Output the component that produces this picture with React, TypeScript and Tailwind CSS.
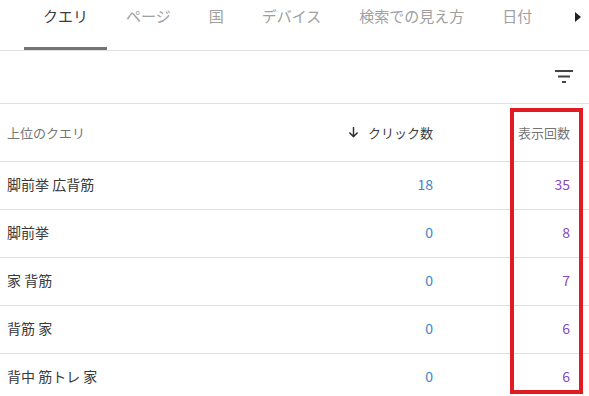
import React from "react";

const tabs = ["クエリ", "ページ", "国", "デバイス", "検索での見え方", "日付"];

const rows = [
  { q: "脚前挙 広背筋", clicks: 18, views: 35 },
  { q: "脚前挙", clicks: 0, views: 8 },
  { q: "家 背筋", clicks: 0, views: 7 },
  { q: "背筋 家", clicks: 0, views: 6 },
  { q: "背中 筋トレ 家", clicks: 0, views: 6 },
];

export default function App() {
  return (
    <div
      className="relative w-[589px] h-[396px] overflow-hidden bg-white"
      style={{ fontFamily: '"Noto Sans CJK JP", "Noto Sans", sans-serif' }}
    >
      {/* tabs */}
      <div className="flex h-[51px] border-b border-[#e0e0e0] pl-[24px]">
        {tabs.map((t, i) => (
          <div
            key={t}
            className={
              i === 0
                ? "flex h-[50px] items-start pt-[5px] px-[19px] text-[15px] text-[#3c3c3c] border-b-[3px] border-[#757575] -mb-[1px]"
                : "flex h-[50px] items-start pt-[5px] px-[19px] text-[15px] text-[#a0a0a0]"
            }
          >
            {t}
          </div>
        ))}
        <div className="ml-auto mr-[8px] mt-[12px]">
          <svg width="6" height="10" viewBox="0 0 6 10">
            <path d="M0 0 L6 5 L0 10 Z" fill="#222" />
          </svg>
        </div>
      </div>

      {/* toolbar */}
      <div className="flex h-[53px] items-center justify-end border-b border-[#e0e0e0] pr-[16px]">
        <svg width="18" height="14" viewBox="0 0 18 14">
          <rect x="0" y="0" width="18" height="2" fill="#444" />
          <rect x="3" y="5.5" width="12" height="2" fill="#444" />
          <rect x="7" y="11" width="4" height="2" fill="#444" />
        </svg>
      </div>

      {/* header */}
      <div className="flex h-[58px] items-center border-b border-[#e0e0e0] text-[13px] leading-none text-[#757575]">
        <div className="flex-1 pl-[7px]">上位のクエリ</div>
        <div className="flex w-[120px] items-center justify-end gap-[9px] text-[#3c3c3c]">
          <svg width="11" height="11" viewBox="0 0 12 12">
            <path d="M6 0 V10 M1.5 6 L6 10.5 L10.5 6" stroke="#333" strokeWidth="1.6" fill="none" />
          </svg>
          クリック数
        </div>
        <div className="w-[156px] pr-[19px] text-right">表示回数</div>
      </div>

      {rows.map((r) => (
        <div
          key={r.q}
          className="flex h-[48px] items-center border-b border-[#e0e0e0] pb-[3px] text-[14px] leading-none"
        >
          <div className="flex-1 pl-[7px] text-[#3a3a3a]">{r.q}</div>
          <div className="w-[120px] text-right text-[#3d85c6]">{r.clicks}</div>
          <div className="w-[156px] pr-[19px] text-right text-[#8a46c0]">{r.views}</div>
        </div>
      ))}

      {/* highlight annotation */}
      <div className="absolute left-[510px] top-[108px] w-[73px] h-[286px] border-[4px] border-[#e21b23]" />
    </div>
  );
}
